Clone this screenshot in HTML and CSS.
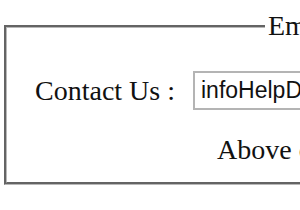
FILE: index.html
```html
<!DOCTYPE html>
<html lang="en">
<head>
    <meta charset="UTF-8">
    <title>Contact</title>
    <link rel="stylesheet" href="styles.css">
</head>
<body>
    <fieldset class="box">
        <legend class="box-title">Email</legend>

        <div class="contact-row">
            <label class="contact-label" for="mail">Contact Us :</label>
            <input class="contact-input" id="mail" type="text" value="infoHelpDesk@example.com">
        </div>

        <p class="note">Above contact is for support queries.</p>
    </fieldset>
</body>
</html>
```

FILE: styles.css
```css
body {
    margin: 0;
    padding-top: 10px;
    width: 300px;
    height: 210px;
    overflow: hidden;
    background: #fff;
    font-family: 'Liberation Serif', 'Times New Roman', serif;
    font-size: 28px;
    color: #111;
}

.box {
    margin: 0 0 0 4px;
    padding: 0 0 16px 0;
    width: 640px;
    border: 3px groove #b8b8b8;
}

.box-title {
    margin-left: 258px;
    padding: 0 3px;
    line-height: 32px;
    white-space: nowrap;
}

.contact-row {
    display: flex;
    align-items: center;
    gap: 18px;
    margin-top: 29px;
    padding-left: 28px;
}

.contact-label {
    line-height: 32px;
    white-space: nowrap;
}

.contact-input {
    box-sizing: border-box;
    width: 420px;
    height: 39px;
    margin: 0;
    padding: 0 6px;
    border: 2px solid #b4b4b4;
    font-family: 'Liberation Sans', Arial, sans-serif;
    font-size: 23px;
    color: #111;
}

.note {
    margin: 24px 0 0;
    padding-left: 210px;
    line-height: 32px;
    white-space: nowrap;
}
```
